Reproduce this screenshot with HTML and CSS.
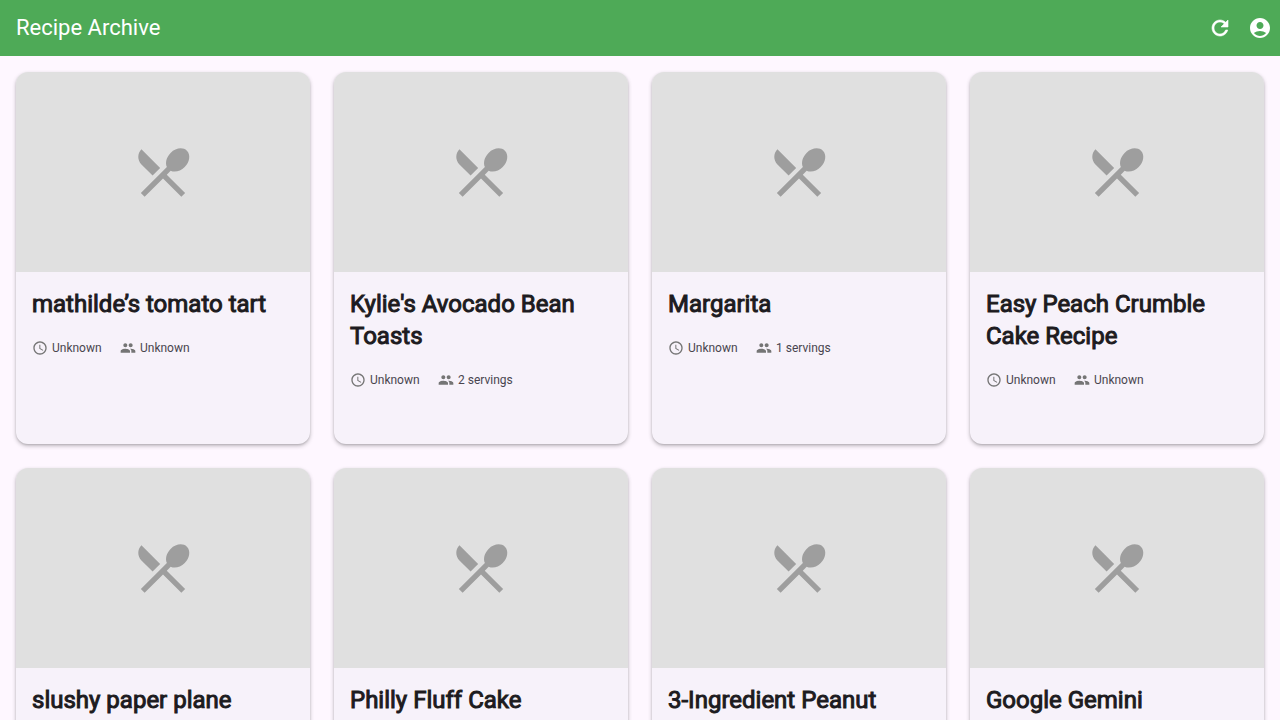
FILE: index.html
```html
<!DOCTYPE html>
<html lang="en">
<head>
<meta charset="utf-8">
<meta name="viewport" content="width=device-width, initial-scale=1">
<title>Recipe Archive</title>
<link rel="stylesheet" href="styles.css">
</head>
<body>
<svg class="sprite" aria-hidden="true">
  <symbol id="utensils" viewBox="0 0 24 24"><path d="M8.1 13.34l2.83-2.83L3.91 3.5c-1.56 1.56-1.56 4.09 0 5.66l4.19 4.18zm6.78-1.81c1.53.71 3.68.21 5.27-1.38 1.91-1.91 2.28-4.65.81-6.12-1.46-1.46-4.2-1.1-6.12.81-1.59 1.59-2.09 3.74-1.38 5.27L3.7 19.87l1.41 1.41L12 14.41l6.88 6.88 1.41-1.41L13.41 13l1.47-1.47z"/></symbol>
  <symbol id="clock" viewBox="0 0 24 24"><path d="M11.99 2C6.47 2 2 6.48 2 12s4.47 10 9.99 10C17.52 22 22 17.52 22 12S17.52 2 11.99 2zM12 20c-4.42 0-8-3.58-8-8s3.58-8 8-8 8 3.58 8 8-3.58 8-8 8zm.5-13H11v6l5.25 3.15.75-1.23-4.5-2.67z"/></symbol>
  <symbol id="people" viewBox="0 0 24 24"><path d="M16 11c1.66 0 2.99-1.34 2.99-3S17.66 5 16 5s-3 1.34-3 3 1.34 3 3 3zm-8 0c1.66 0 2.99-1.34 2.99-3S9.66 5 8 5 5 6.34 5 8s1.34 3 3 3zm0 2c-2.33 0-7 1.17-7 3.5V19h14v-2.5c0-2.33-4.67-3.5-7-3.5zm8 0c-.29 0-.62.02-.97.05 1.16.84 1.97 1.97 1.97 3.45V19h6v-2.5c0-2.33-4.67-3.5-7-3.5z"/></symbol>
</svg>
<header class="app-bar">
  <h1 class="app-title">Recipe Archive</h1>
  <div class="actions">
    <button class="icon-button" type="button" aria-label="Refresh"><svg class="icon" viewBox="0 0 24 24"><path stroke="currentColor" stroke-width=".6" d="M17.65 6.35C16.2 4.9 14.21 4 12 4c-4.42 0-7.99 3.58-7.99 8s3.57 8 7.99 8c3.73 0 6.84-2.55 7.73-6h-2.08c-.82 2.33-3.04 4-5.65 4-3.31 0-6-2.69-6-6s2.69-6 6-6c1.66 0 3.14.69 4.22 1.78L13 11h7V4l-2.35 2.35z"/></svg></button>
    <button class="icon-button" type="button" aria-label="Account"><svg class="icon" viewBox="0 0 24 24"><path d="M12 2C6.48 2 2 6.48 2 12s4.48 10 10 10 10-4.48 10-10S17.52 2 12 2zm0 4c1.93 0 3.5 1.57 3.5 3.5S13.93 13 12 13s-3.5-1.57-3.5-3.5S10.07 6 12 6zm0 14c-2.03 0-4.43-.82-6.14-2.88C7.55 15.8 9.68 15 12 15s4.45.8 6.14 2.12C16.43 19.18 14.03 20 12 20z"/></svg></button>
  </div>
</header>
<main class="recipes">
  <article class="card">
    <div class="photo"><svg class="photo-icon"><use href="#utensils"/></svg></div>
    <div class="details">
      <h2 class="name">mathilde’s tomato tart</h2>
      <div class="meta"><span class="fact"><svg class="fact-icon"><use href="#clock"/></svg>Unknown</span><span class="fact"><svg class="fact-icon"><use href="#people"/></svg>Unknown</span></div>
    </div>
  </article>
  <article class="card">
    <div class="photo"><svg class="photo-icon"><use href="#utensils"/></svg></div>
    <div class="details">
      <h2 class="name">Kylie's Avocado Bean Toasts</h2>
      <div class="meta"><span class="fact"><svg class="fact-icon"><use href="#clock"/></svg>Unknown</span><span class="fact"><svg class="fact-icon"><use href="#people"/></svg>2 servings</span></div>
    </div>
  </article>
  <article class="card">
    <div class="photo"><svg class="photo-icon"><use href="#utensils"/></svg></div>
    <div class="details">
      <h2 class="name">Margarita</h2>
      <div class="meta"><span class="fact"><svg class="fact-icon"><use href="#clock"/></svg>Unknown</span><span class="fact"><svg class="fact-icon"><use href="#people"/></svg>1 servings</span></div>
    </div>
  </article>
  <article class="card">
    <div class="photo"><svg class="photo-icon"><use href="#utensils"/></svg></div>
    <div class="details">
      <h2 class="name">Easy Peach Crumble Cake Recipe</h2>
      <div class="meta"><span class="fact"><svg class="fact-icon"><use href="#clock"/></svg>Unknown</span><span class="fact"><svg class="fact-icon"><use href="#people"/></svg>Unknown</span></div>
    </div>
  </article>
  <article class="card">
    <div class="photo"><svg class="photo-icon"><use href="#utensils"/></svg></div>
    <div class="details"><h2 class="name">slushy paper plane</h2></div>
  </article>
  <article class="card">
    <div class="photo"><svg class="photo-icon"><use href="#utensils"/></svg></div>
    <div class="details"><h2 class="name">Philly Fluff Cake</h2></div>
  </article>
  <article class="card">
    <div class="photo"><svg class="photo-icon"><use href="#utensils"/></svg></div>
    <div class="details"><h2 class="name">3-Ingredient Peanut</h2></div>
  </article>
  <article class="card">
    <div class="photo"><svg class="photo-icon"><use href="#utensils"/></svg></div>
    <div class="details"><h2 class="name">Google Gemini</h2></div>
  </article>
</main>
</body>
</html>
```
FILE: styles.css
```css
* { box-sizing: border-box; }

html { scrollbar-width: none; }

body {
  display: flex;
  flex-direction: column;
  height: 100vh;
  margin: 0;
  background: #fef7ff;
  color: #1d1b20;
  font-family: Roboto, sans-serif;
}

.sprite { display: none; }

.app-bar {
  display: flex;
  flex: none;
  align-items: center;
  justify-content: space-between;
  height: 56px;
  padding-left: 16px;
  background: #4eaa57;
  color: #fff;
}

.app-title {
  margin: 0;
  font-size: 22px;
  font-weight: 400;
  line-height: 28px;
}

.actions { display: flex; }

.icon-button {
  display: flex;
  padding: 8px;
  border: 0;
  background: none;
  color: inherit;
  cursor: pointer;
}

.icon {
  width: 24px;
  height: 24px;
  fill: currentColor;
}

.recipes {
  display: grid;
  flex: 1;
  grid-template-columns: repeat(auto-fill, minmax(280px, 1fr));
  grid-auto-rows: minmax(372px, auto);
  gap: 24px;
  min-height: 0;
  padding: 16px;
  overflow-y: auto;
  scrollbar-width: none;
}

.card {
  overflow: hidden;
  border-radius: 12px;
  background: #f7f2fa;
  box-shadow: 0 2px 4px rgba(0, 0, 0, 0.24), 0 1px 2px rgba(0, 0, 0, 0.12);
}

.photo {
  display: flex;
  align-items: center;
  justify-content: center;
  height: 200px;
  background: #e0e0e0;
}

.photo-icon {
  width: 64px;
  height: 64px;
  fill: #9e9e9e;
}

.details { padding: 16px; }

/* A thin outline gives the regular face its heavier weight. */
.name {
  margin: 0 0 20px;
  font-size: 24px;
  font-weight: 400;
  line-height: 32px;
  -webkit-text-stroke: 1px currentColor;
}

.meta {
  display: flex;
  gap: 16px;
}

.fact {
  display: flex;
  align-items: center;
  gap: 4px;
  min-width: 72px;
  color: #49454f;
  font-size: 12px;
  line-height: 16px;
}

.fact-icon {
  width: 16px;
  height: 16px;
  fill: #757575;
}
```
